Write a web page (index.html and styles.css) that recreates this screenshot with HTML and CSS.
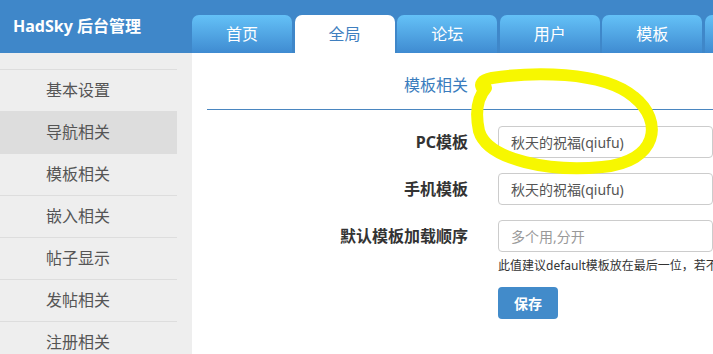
FILE: index.html
```html
<!DOCTYPE html>
<html lang="zh-CN">
<head>
    <meta charset="UTF-8">
    <meta name="viewport" content="width=device-width, initial-scale=1.0">
    <title>HadSky 后台管理</title>
    <link rel="stylesheet" href="styles.css">
</head>
<body>

    <div class="topo">
        <div class="logo">HadSky 后台管理</div>
        <ul class="abas">
            <li>首页</li>
            <li class="ativa">全局</li>
            <li>论坛</li>
            <li>用户</li>
            <li>模板</li>
            <li></li>
        </ul>
    </div>

    <div class="principal">
        <div class="lateral">
            <ul class="menu">
                <li>基本设置</li>
                <li class="ativo">导航相关</li>
                <li>模板相关</li>
                <li>嵌入相关</li>
                <li>帖子显示</li>
                <li>发帖相关</li>
                <li>注册相关</li>
            </ul>
        </div>

        <div class="conteudo">
            <div class="titulo"><span>模板相关</span></div>

            <form class="formulario" method="dialog">
                <label for="pc">PC模板</label>
                <input type="text" id="pc" value="秋天的祝福(qiufu)">

                <label for="mobile">手机模板</label>
                <input type="text" id="mobile" value="秋天的祝福(qiufu)">

                <label for="ordem">默认模板加载顺序</label>
                <div class="campo">
                    <input type="text" id="ordem" placeholder="多个用,分开">
                    <p class="ajuda">此值建议default模板放在最后一位，若不</p>
                    <button type="submit">保存</button>
                </div>
            </form>
        </div>
    </div>

    <!-- marcação amarela por cima da captura -->
    <svg class="marca" width="713" height="354" viewBox="0 0 713 354">
        <path d="M 484 90 C 478 84, 482 80, 492 78 C 530 72, 602 70, 634 97 C 664 121, 658 162, 602 167 C 552 172, 488 161, 479 131 C 475 112, 477 98, 486 88"
              fill="none" stroke="#f7f700" stroke-width="12" stroke-linecap="round" stroke-linejoin="round"/>
    </svg>

</body>
</html>
```

FILE: styles.css
```css
html, body {
    height: 100%;
}
body {
    margin: 0;
    overflow: hidden;
    font-family: "Noto Sans", "Noto Sans CJK SC", sans-serif;
    color: #333;
    background-color: #fff;
}
ul {
    list-style: none;
    margin: 0;
    padding: 0;
}

/* barra do topo */
.topo {
    display: flex;
    height: 53px;
    background-color: #3f87c9;
    overflow: hidden;
}
.logo {
    width: 192px;
    flex-shrink: 0;
    box-sizing: border-box;
    padding-left: 13px;
    line-height: 52px;
    font-size: 16px;
    font-weight: bold;
    color: #fff;
}
.abas {
    display: flex;
    align-self: flex-end;
}
.abas li {
    flex-shrink: 0;
    width: 100px;
    height: 38px;
    margin-right: 2.6px;
    line-height: 38px;
    text-align: center;
    font-size: 16px;
    color: #fff;
    border-radius: 7px 7px 0 0;
    background: linear-gradient(#64c1f7, #3f8bd1);
}
.abas li.ativa {
    background: #fff;
    color: #3f7fbf;
}

/* parte de baixo */
.principal {
    display: flex;
    height: calc(100% - 53px);
}
.lateral {
    width: 192px;
    flex-shrink: 0;
    box-sizing: border-box;
    padding: 16px 15px 0 0;
    background-color: #eee;
}
.menu {
    border-top: 1px solid #ddd;
}
.menu li {
    height: 41px;
    padding-left: 46px;
    line-height: 41px;
    border-bottom: 1px solid #ddd;
    font-size: 16px;
    color: #555;
}
.menu li.ativo {
    background-color: #ddd;
}

.conteudo {
    flex: 1;
    padding-left: 15px;
}
.titulo {
    display: grid;
    grid-template-columns: 261px 1fr;
    padding-top: 21px;
    padding-bottom: 13px;
    border-bottom: 1px solid #4a86c0;
}
.titulo span {
    text-align: right;
    font-size: 16px;
    line-height: 22px;
    color: #3a7cbd;
}

.formulario {
    display: grid;
    grid-template-columns: 261px 1fr;
    column-gap: 30px;
    row-gap: 15px;
    padding-top: 16px;
    margin: 0;
}
.formulario label {
    text-align: right;
    font-size: 16px;
    font-weight: bold;
    line-height: 32px;
    color: #333;
}
.formulario input {
    width: 100%;
    height: 32px;
    box-sizing: border-box;
    padding: 0 12px;
    border: 1px solid #ccc;
    border-radius: 4px;
    font-family: inherit;
    font-size: 14px;
    color: #555;
}
.formulario input::placeholder {
    color: #999;
}
.campo {
    min-width: 0;
}
.ajuda {
    margin: 6px 0 13px;
    font-size: 12px;
    line-height: 16px;
    white-space: nowrap;
    color: #333;
}
.campo button {
    width: 60px;
    height: 32px;
    border: 0;
    border-radius: 4px;
    background-color: #428bca;
    color: #fff;
    font-family: inherit;
    font-size: 14px;
    font-weight: bold;
}

/* marca amarela */
.marca {
    position: absolute;
    left: 0;
    top: 0;
    pointer-events: none;
}
```
